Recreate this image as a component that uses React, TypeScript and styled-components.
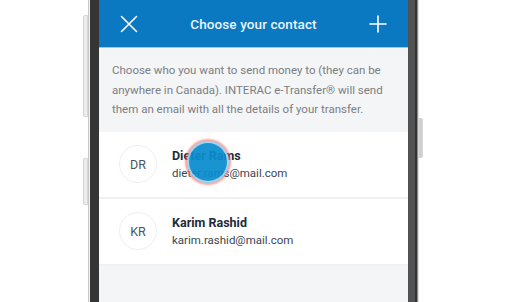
import React from "react";
import styled, { createGlobalStyle } from "styled-components";

const GlobalStyle = createGlobalStyle`
  html, body {
    margin: 0;
    padding: 0;
    background: #ffffff;
  }
  body {
    font-family: Roboto, "Noto Sans", Arial, sans-serif;
  }
`;

const Stage = styled.div`
  display: flex;
  height: 302px;
  padding-left: 88px;
  overflow: hidden;
`;

const Phone = styled.div`
  position: relative;
  display: flex;
  height: 302px;
`;

const LeftBezel = styled.div`
  width: 11px;
  background: linear-gradient(
    to right,
    #c8c8c8 0 1px,
    #f2f2f2 1px 2px,
    #353535 2px
  );
`;

const RightBezel = styled.div`
  width: 11px;
  background: linear-gradient(
    to right,
    #525252 0 7px,
    #333333 7px 9px,
    #8e8e8e 9px 10px,
    #dcdcdc 10px
  );
`;

const SideButton = styled.div<{ $side: "left" | "right"; $top: number; $height: number }>`
  position: absolute;
  top: ${({ $top }) => $top}px;
  height: ${({ $height }) => $height}px;
  width: 5px;
  ${({ $side }) => ($side === "left" ? "left: -5px;" : "right: -4px;")}
  background: ${({ $side }) => ($side === "left" ? "#ececec" : "#cfcfcf")};
  border: 1px solid #d6d6d6;
  border-radius: ${({ $side }) => ($side === "left" ? "2px 0 0 2px" : "0 2px 2px 0")};
  box-sizing: border-box;
`;

const Screen = styled.div`
  position: relative;
  display: flex;
  flex-direction: column;
  width: 309px;
  background: #f4f5f7;
`;

const Header = styled.header`
  display: flex;
  align-items: center;
  justify-content: space-between;
  height: 48px;
  padding: 0 20px;
  background: #0a79c2;
  border-bottom: 1px solid #9cc8e8;
  box-sizing: border-box;
`;

const IconButton = styled.button`
  display: flex;
  align-items: center;
  justify-content: center;
  width: 20px;
  height: 20px;
  padding: 0;
  border: none;
  background: none;
  cursor: pointer;
`;

const Title = styled.h1`
  margin: 0;
  color: #eaf3fb;
  font-size: 13.5px;
  font-weight: 500;
  letter-spacing: 0.1px;
`;

const Intro = styled.p`
  margin: 0;
  padding: 13px 13px 12px;
  color: #7b7e83;
  font-size: 11.5px;
  line-height: 19.5px;
`;

const ContactList = styled.ul`
  margin: 0;
  padding: 0;
  list-style: none;
  background: #ffffff;
`;

const ContactRow = styled.li`
  position: relative;
  display: flex;
  align-items: center;
  gap: 15px;
  height: 65px;
  padding: 0 20px;
  border-bottom: 2px solid #eef0f3;
`;

const Avatar = styled.div`
  display: flex;
  align-items: center;
  justify-content: center;
  width: 38px;
  height: 38px;
  border: 1px solid #eeeff1;
  border-radius: 50%;
  box-sizing: border-box;
  color: #4a5460;
  font-size: 12.5px;
`;

const ContactText = styled.div`
  display: flex;
  flex-direction: column;
  gap: 3px;
`;

const Name = styled.span`
  color: #1e2b39;
  font-size: 12.5px;
  font-weight: 700;
`;

const Email = styled.span`
  color: #3c4650;
  font-size: 11.5px;
`;

const TouchDot = styled.div`
  position: absolute;
  left: 90px;
  top: 11px;
  width: 38px;
  height: 38px;
  border-radius: 50%;
  background: rgba(8, 140, 205, 0.93);
  box-shadow: 0 0 0 2px rgba(150, 220, 245, 0.9), 0 0 2px 4px rgba(240, 100, 100, 0.6);
`;

const contacts = [
  { initials: "DR", name: "Dieter Rams", email: "dieter.rams@mail.com", touched: true },
  { initials: "KR", name: "Karim Rashid", email: "karim.rashid@mail.com", touched: false },
];

const CloseIcon = () => (
  <svg width="18" height="18" viewBox="0 0 18 18" fill="none">
    <path d="M1.5 1.5 L16.5 16.5 M16.5 1.5 L1.5 16.5" stroke="#ffffff" strokeWidth="1.6" strokeLinecap="round" />
  </svg>
);

const PlusIcon = () => (
  <svg width="18" height="18" viewBox="0 0 18 18" fill="none">
    <path d="M9 1 V17 M1 9 H17" stroke="#ffffff" strokeWidth="1.6" strokeLinecap="round" />
  </svg>
);

const App: React.FC = () => {
  return (
    <>
      <GlobalStyle />
      <Stage>
        <Phone>
          <SideButton $side="left" $top={15} $height={102} />
          <SideButton $side="left" $top={158} $height={47} />
          <SideButton $side="right" $top={118} $height={40} />
          <LeftBezel />
          <Screen>
            <Header>
              <IconButton aria-label="Close">
                <CloseIcon />
              </IconButton>
              <Title>Choose your contact</Title>
              <IconButton aria-label="Add contact">
                <PlusIcon />
              </IconButton>
            </Header>
            <Intro>
              Choose who you want to send money to (they can be anywhere in Canada). INTERAC
              e-Transfer® will send them an email with all the details of your transfer.
            </Intro>
            <ContactList>
              {contacts.map((c) => (
                <ContactRow key={c.initials}>
                  <Avatar>{c.initials}</Avatar>
                  <ContactText>
                    <Name>{c.name}</Name>
                    <Email>{c.email}</Email>
                  </ContactText>
                  {c.touched && <TouchDot />}
                </ContactRow>
              ))}
            </ContactList>
          </Screen>
          <RightBezel />
        </Phone>
      </Stage>
    </>
  );
};

export default App;
